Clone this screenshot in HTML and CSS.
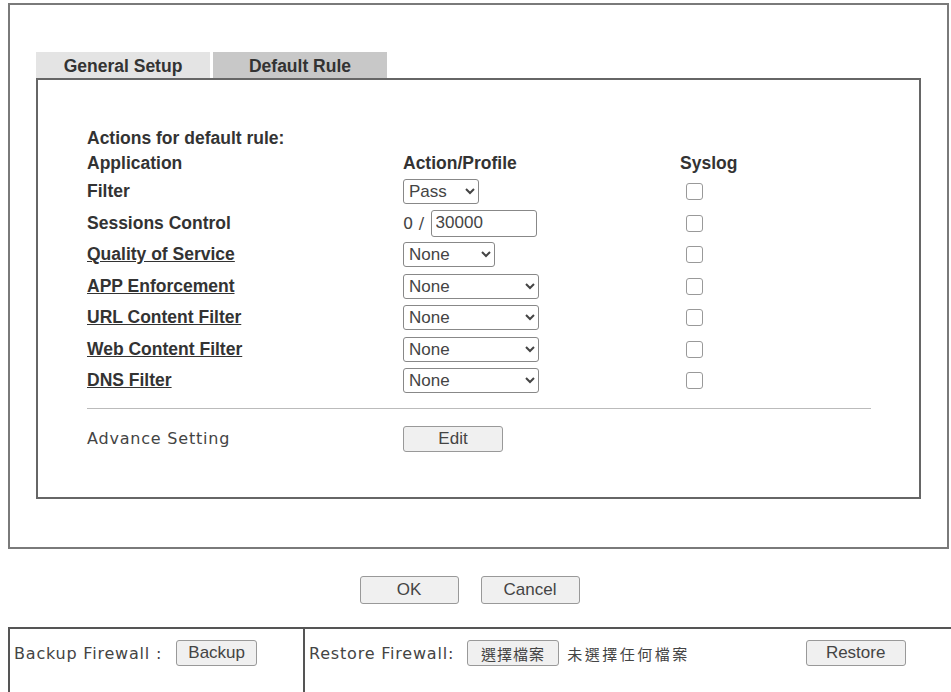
FILE: index.html
```html
<!DOCTYPE html>
<html lang="zh-Hant">
  <head>
    <meta charset="UTF-8" />
    <title>Firewall - Default Rule</title>
    <link rel="stylesheet" href="styles.css">
  </head>
  <body>
    <div class="panel">
      <div class="tabs">
        <div class="tab">General Setup</div>
        <div class="tab active">Default Rule</div>
      </div>
      <div class="tab-body">
        <div class="rules">
          <div class="cell wide">Actions for default rule:</div>
          <div class="cell">Application</div>
          <div class="cell">Action/Profile</div>
          <div class="cell">Syslog</div>

          <div class="cell">Filter</div>
          <div class="cell">
            <select class="sel sel-pass"><option>Pass</option><option>Block</option></select>
          </div>
          <div class="cell"><input type="checkbox" class="chk" /></div>

          <div class="cell">Sessions Control</div>
          <div class="cell">
            <span class="plain">0 /</span>
            <input type="text" class="num" value="30000" />
          </div>
          <div class="cell"><input type="checkbox" class="chk" /></div>

          <div class="cell"><a href="#" class="link">Quality of Service</a></div>
          <div class="cell">
            <select class="sel sel-qos"><option>None</option></select>
          </div>
          <div class="cell"><input type="checkbox" class="chk" /></div>

          <div class="cell"><a href="#" class="link">APP Enforcement</a></div>
          <div class="cell">
            <select class="sel"><option>None</option></select>
          </div>
          <div class="cell"><input type="checkbox" class="chk" /></div>

          <div class="cell"><a href="#" class="link">URL Content Filter</a></div>
          <div class="cell">
            <select class="sel"><option>None</option></select>
          </div>
          <div class="cell"><input type="checkbox" class="chk" /></div>

          <div class="cell"><a href="#" class="link">Web Content Filter</a></div>
          <div class="cell">
            <select class="sel"><option>None</option></select>
          </div>
          <div class="cell"><input type="checkbox" class="chk" /></div>

          <div class="cell"><a href="#" class="link">DNS Filter</a></div>
          <div class="cell">
            <select class="sel"><option>None</option></select>
          </div>
          <div class="cell"><input type="checkbox" class="chk" /></div>
        </div>

        <div class="divider"></div>

        <div class="advance">
          <span class="plain">Advance Setting</span>
          <button class="btn btn-edit">Edit</button>
        </div>
      </div>
    </div>

    <div class="actions">
      <button class="btn btn-main">OK</button>
      <button class="btn btn-main">Cancel</button>
    </div>

    <table class="backup">
      <tr>
        <td class="backup-cell">
          <div class="strip">
            <span class="plain">Backup Firewall :</span>
            <button class="btn btn-backup">Backup</button>
          </div>
        </td>
        <td class="restore-cell">
          <div class="strip">
            <span class="plain">Restore Firewall:</span>
            <button class="btn btn-file">選擇檔案</button>
            <span class="nofile">未選擇任何檔案</span>
            <button class="btn btn-restore">Restore</button>
          </div>
        </td>
      </tr>
    </table>
  </body>
</html>
```

FILE: styles.css
```css
html,
body {
  overflow: hidden;
}
body {
  margin: 3px 0 0 8px;
  font-family: "Liberation Sans", Arial, sans-serif;
  color: #333;
  background: #fff;
}

/* outer frame */
.panel {
  width: 941px;
  height: 546px;
  box-sizing: border-box;
  border: 2px solid #7a7a7a;
  padding: 47px 0 0 26px;
}

.tabs {
  display: flex;
  gap: 3px;
  height: 26px;
}
.tab {
  width: 174px;
  background: #e4e4e4;
  font-weight: bold;
  font-size: 17.5px;
  line-height: 28px;
  text-align: center;
  color: #333;
}
.tab.active {
  background: #c8c8c8;
}

.tab-body {
  width: 885px;
  height: 421px;
  box-sizing: border-box;
  border: 2px solid #666;
  padding: 46px 0 0 49px;
}

/* rule table */
.rules {
  display: grid;
  grid-template-columns: 316px 277px 100px;
  grid-template-rows: 24px 26px;
  grid-auto-rows: 31.5px;
  font-weight: bold;
  font-size: 17.5px;
}
.cell {
  display: flex;
  align-items: center;
}
.wide {
  grid-column: 1 / 4;
}
.link {
  color: #333;
  text-decoration: underline;
}

.sel {
  font-family: "Liberation Sans", Arial, sans-serif;
  font-size: 17px;
  color: #444;
  width: 136px;
  height: 25px;
  border: 1px solid #888;
  border-radius: 3px;
  background: #fff;
  padding: 0 1px;
}
.sel-pass {
  width: 76px;
}
.sel-qos {
  width: 92px;
}
.num {
  font-family: "Liberation Sans", Arial, sans-serif;
  font-size: 17px;
  color: #444;
  width: 106px;
  height: 27px;
  box-sizing: border-box;
  border: 1px solid #888;
  border-radius: 3px;
  padding: 1px 4px;
  margin-left: 6px;
}
.chk {
  appearance: none;
  width: 17px;
  height: 17px;
  margin: 0 0 0 6px;
  border: 1px solid #999;
  border-radius: 3px;
  background: #fff;
}

.plain {
  font-family: "DejaVu Sans", sans-serif;
  font-weight: normal;
  font-size: 16px;
  letter-spacing: 0.8px;
  color: #444;
}
.rules .plain {
  font-size: 16px;
  letter-spacing: 0.3px;
}

.divider {
  width: 784px;
  border-top: 1px solid #bbb;
  margin: 11px 0 15px;
}

.advance {
  display: flex;
  align-items: center;
  height: 30px;
}
.advance .plain {
  width: 316px;
}

.btn {
  font-family: "Liberation Sans", Arial, sans-serif;
  font-size: 17px;
  color: #444;
  background: #f0f0f0;
  border: 1px solid #999;
  border-radius: 3px;
  height: 26px;
  padding: 0;
}
.btn-edit {
  width: 100px;
}

.actions {
  display: flex;
  justify-content: center;
  gap: 22px;
  margin: 27px 0 0 -14px;
  width: 951px;
}
.btn-main {
  width: 99px;
  height: 28px;
}

/* backup / restore strip */
.backup {
  margin-top: 23px;
  width: 960px;
  border-collapse: collapse;
  border: 2px solid #555;
}
.backup td {
  height: 80px;
  vertical-align: top;
  padding: 11px 0 0 4px;
}
.strip {
  display: flex;
  align-items: center;
  height: 26px;
}
.backup-cell {
  width: 289px;
  border-right: 2px solid #555;
}
.btn-backup {
  width: 81px;
  margin-left: 14px;
}
.btn-file {
  font-family: "Noto Sans CJK TC", sans-serif;
  font-size: 15px;
  width: 92px;
  margin-left: 13px;
  letter-spacing: 1px;
}
.nofile {
  font-family: "Noto Sans CJK TC", sans-serif;
  font-size: 15px;
  letter-spacing: 2.5px;
  color: #444;
  margin-left: 8px;
}
.btn-restore {
  width: 100px;
  margin-left: 116px;
}
```
